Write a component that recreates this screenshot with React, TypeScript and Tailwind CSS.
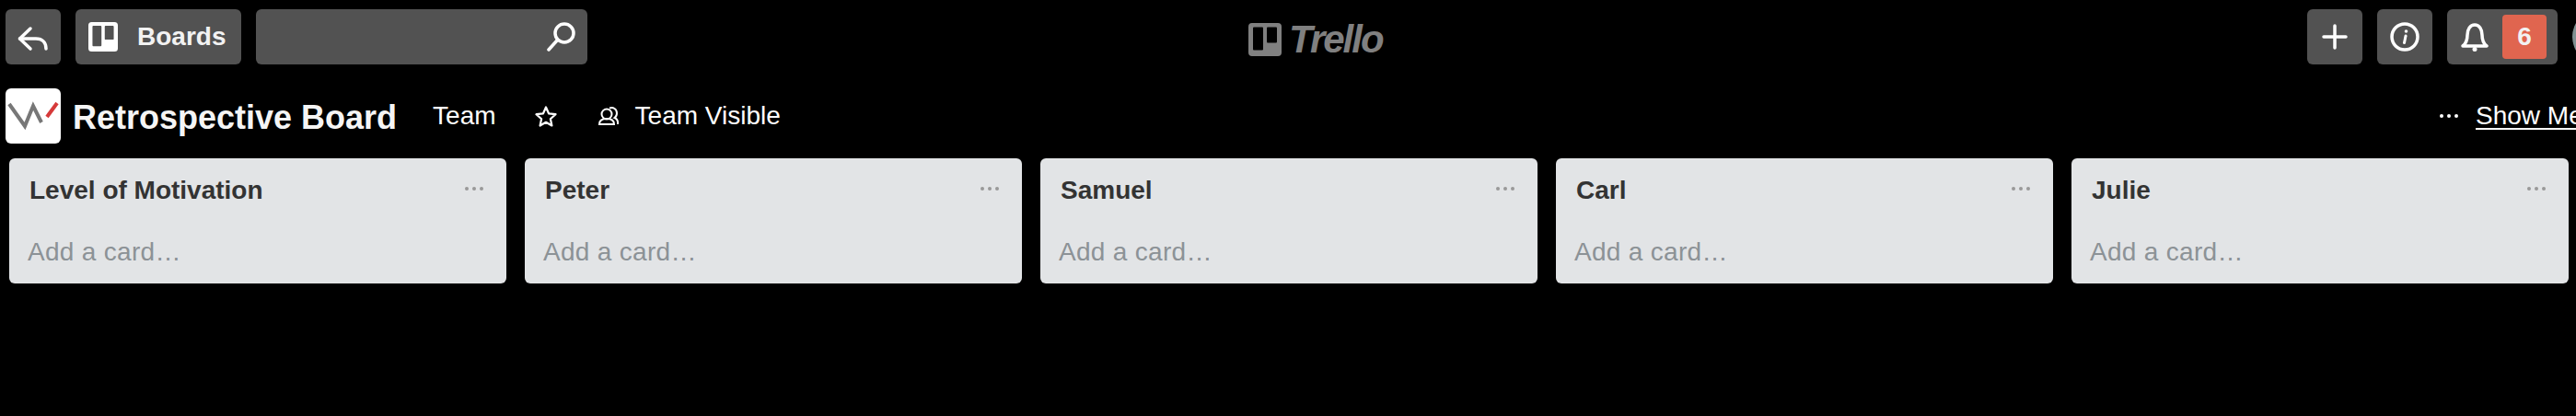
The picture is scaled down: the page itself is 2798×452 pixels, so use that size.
const lists = ["Level of Motivation", "Peter", "Samuel", "Carl", "Julie"];

function Dots({ className }: { className: string }) {
  return (
    <svg width="20" height="4" viewBox="0 0 20 4" className={className} fill="currentColor">
      <circle cx="2" cy="2" r="2" />
      <circle cx="10" cy="2" r="2" />
      <circle cx="18" cy="2" r="2" />
    </svg>
  );
}

function TrelloMark({ size, className }: { size: number; className: string }) {
  return (
    <svg width={size} height={size} viewBox="0 0 36 36" className={className}>
      <path
        fill="currentColor"
        fillRule="evenodd"
        d="M4 0h28a4 4 0 0 1 4 4v28a4 4 0 0 1-4 4H4a4 4 0 0 1-4-4V4a4 4 0 0 1 4-4zM6 4.500a1 1 0 0 0-1 1v23a1 1 0 0 0 1 1h9a1 1 0 0 0 1-1v-23a1 1 0 0 0-1-1zM21 4.500a1 1 0 0 0-1 1v15a1 1 0 0 0 1 1h9a1 1 0 0 0 1-1v-15a1 1 0 0 0-1-1z"
      />
    </svg>
  );
}

function TopButton({ children, className }: { children: React.ReactNode; className: string }) {
  return <div className={`flex h-[60px] items-center rounded-[6px] bg-[#525252] ${className}`}>{children}</div>;
}

export default function App() {
  return (
    <div className="h-[452px] w-[2798px] overflow-hidden bg-black pt-[10px] font-['Liberation_Sans',sans-serif]">
      <header className="relative flex h-[60px] items-center pl-[6px]">
        <TopButton className="w-[60px]">
          <svg width="60" height="60" viewBox="0 0 60 60" fill="none" stroke="white" strokeWidth="3.5" strokeLinecap="round" strokeLinejoin="round">
            <path d="M27 21 15.500 32 27 43" />
            <path d="M15.500 32H33c7 0 11 4 11 11" />
          </svg>
        </TopButton>
        <TopButton className="ml-[16px] w-[180px] pl-[14px]">
          <TrelloMark size={32} className="text-white" />
          <span className="ml-[21px] text-[28px] font-bold text-[#f2f2f2]">Boards</span>
        </TopButton>
        <TopButton className="ml-[16px] w-[360px] justify-end pr-[13px]">
          <svg width="32" height="32" viewBox="0 0 32 32" fill="none" stroke="white" strokeWidth="3.5" strokeLinecap="round">
            <circle cx="20" cy="12" r="10" />
            <path d="M12 20 3 30" />
          </svg>
        </TopButton>
        <div className="absolute left-[1356px] top-[12px] flex items-center gap-[8px] text-[#808080]">
          <TrelloMark size={36} className="text-[#808080]" />
          <span className="text-[42px] leading-none font-bold italic tracking-[-2px]">Trello</span>
        </div>
        <div className="ml-auto flex items-center gap-[16px] pr-[20px]">
          <TopButton className="w-[60px] justify-center">
            <svg width="28" height="28" viewBox="0 0 28 28" stroke="white" strokeWidth="3.5" strokeLinecap="round">
              <path d="M14 2v24M2 14h24" />
            </svg>
          </TopButton>
          <TopButton className="w-[60px] justify-center">
            <svg width="32" height="32" viewBox="0 0 32 32" fill="none">
              <circle cx="16" cy="16" r="14" stroke="white" strokeWidth="3.500" />
              <path d="M17 15l-1.500 7.500" stroke="white" strokeWidth="3" strokeLinecap="round" />
              <circle cx="17.500" cy="10" r="1.800" fill="white" />
            </svg>
          </TopButton>
          <TopButton className="w-[120px] pl-[15px]">
            <svg width="30" height="32" viewBox="0 0 30 32" fill="none" stroke="white" strokeWidth="3.500" strokeLinejoin="round">
              <path d="M2 26c4-3 5-7 5-12 0-6 3-11 8-11s8 5 8 11c0 5 1 9 5 12z" />
              <circle cx="15" cy="29.500" r="2.500" fill="white" stroke="none" />
            </svg>
            <div className="ml-[15px] flex h-[48px] w-[48px] items-center justify-center rounded-[4px] bg-[#e0654f] text-[28px] font-bold text-[#f2f2f2]">
              6
            </div>
          </TopButton>
        </div>
        <div className="absolute left-[2794px] top-0 h-[60px] w-[60px] rounded-full bg-[#7f9092]" />
      </header>

      <div className="mt-[26px] flex h-[60px] items-center pl-[6px] text-white">
        <div className="h-[60px] w-[60px] rounded-[6px] bg-white">
          <svg width="60" height="60" viewBox="0 0 60 60" fill="none" strokeWidth="4">
            <path d="M4 17 21 41 30 19 39 37" stroke="#777" />
            <path d="M45 31 56 16" stroke="#d63a3a" />
          </svg>
        </div>
        <span className="ml-[13px] pt-[3px] text-[36px] font-bold text-[#f5f5f5]">Retrospective Board</span>
        <span className="ml-[39px] text-[28px]">Team</span>
        <svg className="ml-[42px]" width="24" height="23" viewBox="0 0 24 23" fill="none" stroke="white" strokeWidth="2.200" strokeLinejoin="round">
          <path d="M12 1.500l3 6.800 7.500.9-5.600 5 1.500 7.300-6.400-3.700-6.400 3.700 1.500-7.300-5.600-5 7.500-.9z" />
        </svg>
        <svg className="ml-[45px]" width="22" height="20" viewBox="0 0 22 20" fill="none" stroke="white" strokeWidth="2">
          <circle cx="9" cy="8" r="5.500" />
          <path d="M1 19c0-4 3-6 8-6s8 2 8 6z" />
          <path d="M12 1.500c4-1.500 8 1 8 5.500 0 2-1 4-2.500 5 2.500 1 4 3 3.500 7" />
        </svg>
        <span className="ml-[18px] text-[28px]">Team Visible</span>
        <Dots className="ml-auto text-white" />
        <span className="ml-[19px] mr-[-20px] w-[129px] overflow-hidden whitespace-nowrap text-[28px] underline underline-offset-4">Show Menu</span>
      </div>

      <main className="mt-[16px] flex gap-[20px] pl-[10px]">
        {lists.map((name) => (
          <section key={name} className="relative h-[136px] w-[540px] shrink-0 rounded-[6px] bg-[#e2e4e6] pl-[22px]">
            <h2 className="pt-[17px] text-[28px] leading-[36px] font-bold text-[#333]">{name}</h2>
            <Dots className="absolute right-[25px] top-[31px] text-[#999]" />
            <p className="mt-[31px] -ml-[2px] text-[28px] leading-[36px] tracking-[0.3px] text-[#8c9296]">Add a card…</p>
          </section>
        ))}
      </main>
    </div>
  );
}
